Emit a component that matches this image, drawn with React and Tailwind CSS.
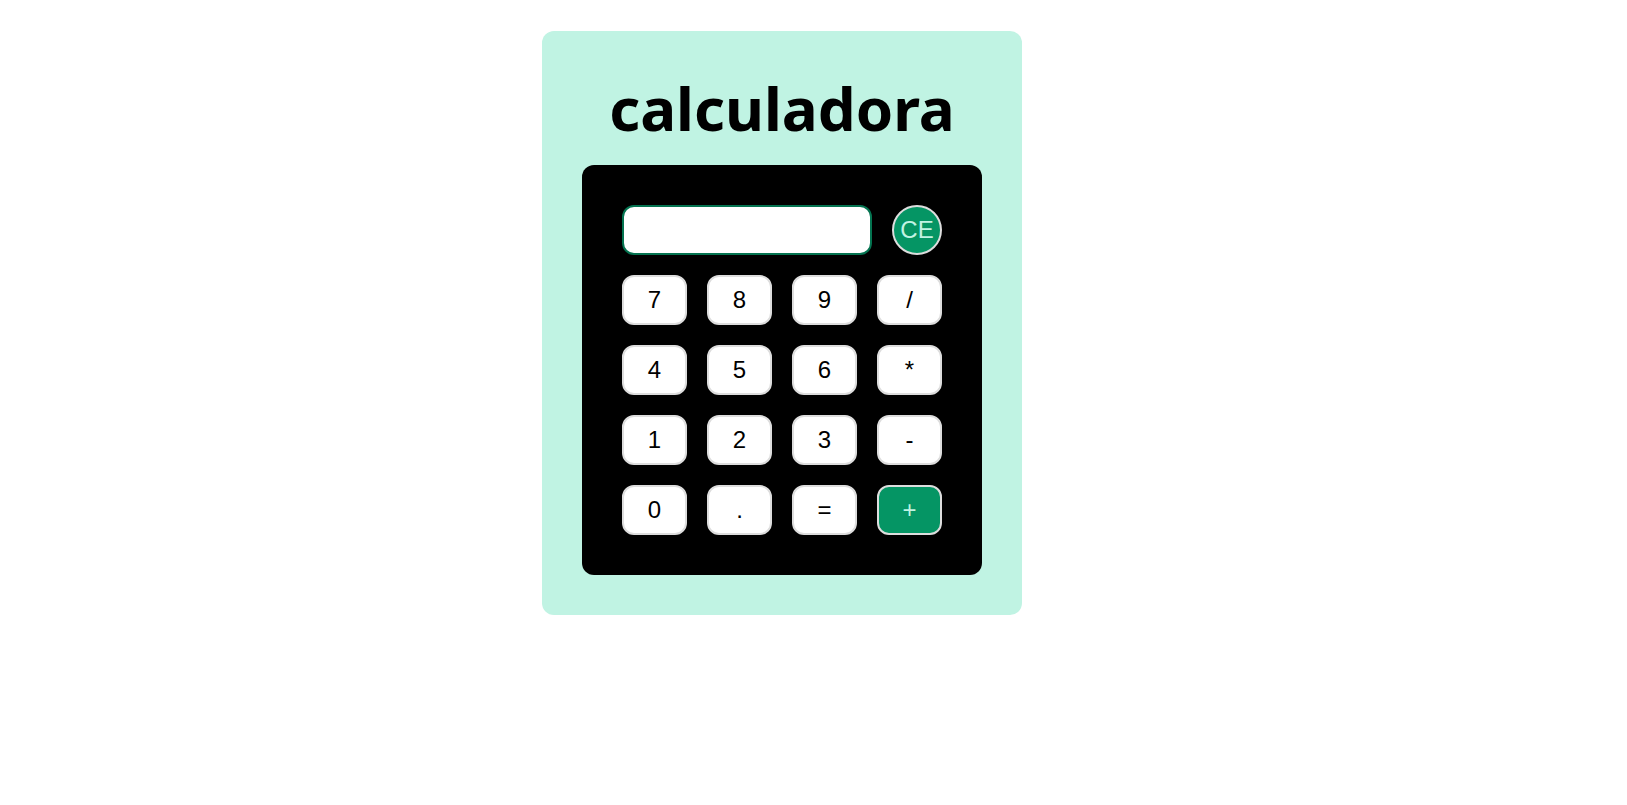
import { useState } from "react";
import clsx from "clsx";

const keys = [
  "7", "8", "9", "/",
  "4", "5", "6", "*",
  "1", "2", "3", "-",
  "0", ".", "=", "+",
];

const isOperator = (key) => ["+", "-", "*", "/"].includes(key);

function calculate(expression) {
  const tokens = expression.match(/\d*\.?\d+|[-+*/]/g) || [];
  const terms = [];
  let operator = "+";

  tokens.forEach((token) => {
    if (isOperator(token)) {
      operator = token;
      return;
    }
    const number = Number(token);
    if (operator === "+") terms.push(number);
    if (operator === "-") terms.push(-number);
    if (operator === "*") terms.push(terms.pop() * number);
    if (operator === "/") terms.push(terms.pop() / number);
  });

  return String(terms.reduce((total, term) => total + term, 0));
}

function Key({ value, onPress }) {
  return (
    <button
      type="button"
      onClick={() => onPress(value)}
      className={clsx(
        "h-[50px] rounded-xl border-2 border-[#dddddd] text-2xl cursor-pointer",
        value === "+" ? "bg-[#059564] text-[#c0f3e3]" : "bg-white text-black"
      )}
    >
      {value}
    </button>
  );
}

function App() {
  const [display, setDisplay] = useState("");

  const handlePress = (value) => {
    if (value === "=") {
      setDisplay(display ? calculate(display) : "");
      return;
    }
    setDisplay(display + value);
  };

  return (
    <main className="flex justify-center pt-[31px] pr-[63px] pb-8 font-['Liberation_Sans',Arial,sans-serif]">
      <section className="w-full max-w-[480px] rounded-xl bg-[#c0f3e3] p-10">
        <h1 className="mb-5 text-center font-['Noto_Sans',sans-serif] text-[60px] leading-[74px] font-bold text-black">
          calculadora
        </h1>

        <div className="rounded-xl bg-black p-10">
          <div className="mb-5 flex gap-5">
            <input
              type="text"
              aria-label="Resultado"
              value={display}
              readOnly
              className="h-[50px] min-w-0 flex-1 rounded-xl border-2 border-[#047350] bg-white px-3 text-right text-2xl text-black outline-none"
            />
            <button
              type="button"
              onClick={() => setDisplay("")}
              className="size-[50px] shrink-0 cursor-pointer rounded-full border-2 border-[#dddddd] bg-[#059564] text-2xl text-[#c0f3e3]"
            >
              CE
            </button>
          </div>

          <div className="grid grid-cols-4 gap-5">
            {keys.map((key) => (
              <Key key={key} value={key} onPress={handlePress} />
            ))}
          </div>
        </div>
      </section>
    </main>
  );
}

export default App;
